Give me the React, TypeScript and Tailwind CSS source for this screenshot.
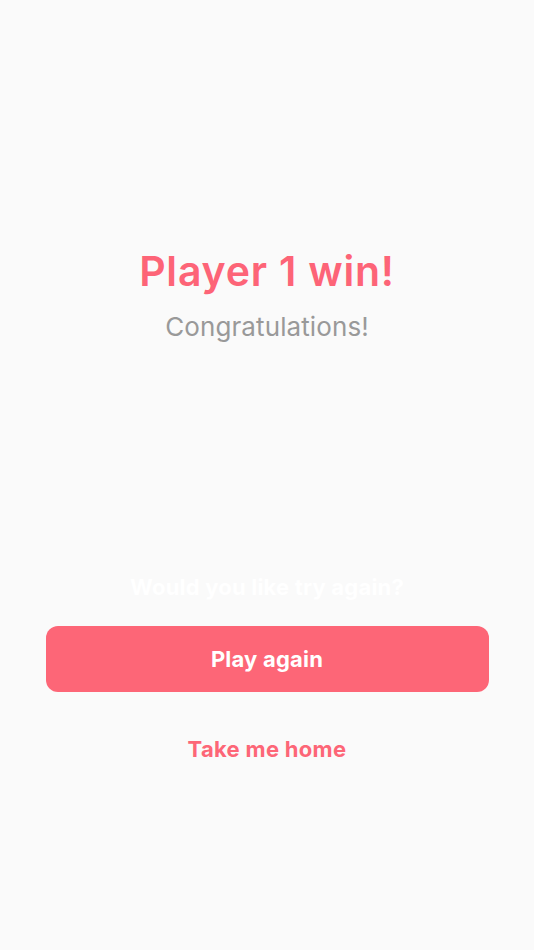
import React from "react";

export default function App() {
  return (
    <div
      className="w-[534px] h-[950px] bg-[#fafafa] flex flex-col items-center"
      style={{ fontFamily: "Inter, 'Noto Sans', sans-serif" }}
    >
      <div className="h-[244px]" />
      <h1 className="text-[41px] leading-[54px] font-semibold text-[#fd6477] tracking-[0.8px]">
        Player 1 win!
      </h1>
      <p className="mt-[12px] text-[26px] leading-[34px] text-[#999999] tracking-[0.1px]">
        Congratulations!
      </p>
      <div className="h-[228px]" />
      <p className="text-[22px] leading-[30px] font-bold text-white tracking-[0.2px]">
        Would you like try again?
      </p>
      <button className="mt-[24px] w-[443px] h-[66px] rounded-[12px] bg-[#fd6677] text-white text-[22px] font-bold tracking-[0.2px]">
        Play again
      </button>
      <button className="mt-[40px] text-[22px] font-bold text-[#fd6677] leading-[34px] tracking-[0.3px]">
        Take me home
      </button>
    </div>
  );
}
